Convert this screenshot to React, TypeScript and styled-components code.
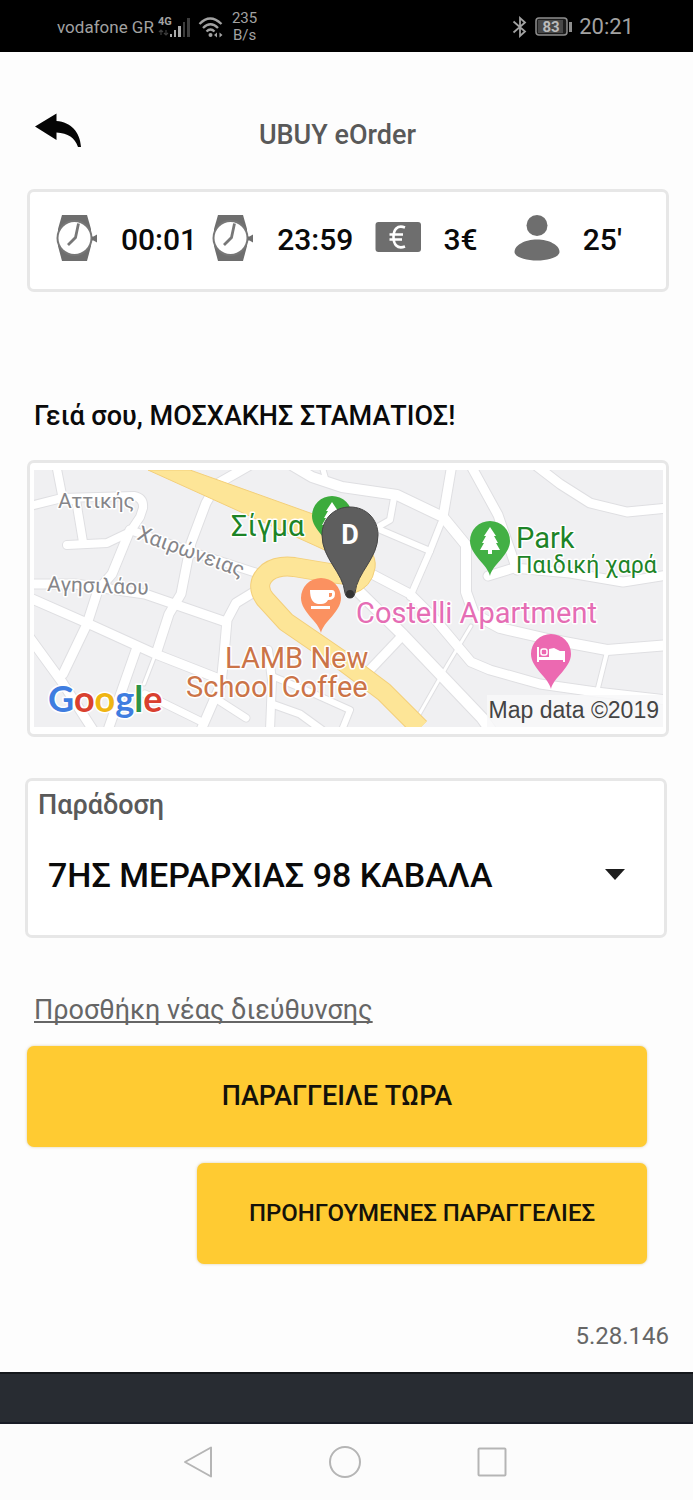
import React from "react";
import styled, { createGlobalStyle } from "styled-components";

const GlobalStyle = createGlobalStyle`
  * { box-sizing: border-box; }
  body {
    margin: 0;
    background: #fdfdfd;
    font-family: Roboto, "Noto Sans", sans-serif;
    color: #0a0a0a;
  }
`;

const Screen = styled.div`
  display: flex;
  flex-direction: column;
  min-height: 100vh;
`;

const StatusBar = styled.header`
  display: flex;
  align-items: center;
  justify-content: space-between;
  height: 52px;
  padding: 2px 59px 0 57px;
  background: #000;
  color: #a2a2a2;
`;

const StatusGroup = styled.div<{ $gap: number }>`
  display: flex;
  align-items: center;
  gap: ${(p) => p.$gap}px;
`;

const Carrier = styled.span`
  font-size: 17px;
  line-height: 24px;
`;

const SignalGroup = styled.div`
  display: flex;
  align-items: center;
  gap: 8px;
`;

const Speed = styled.span`
  font-size: 15px;
  line-height: 17px;
  text-align: center;
`;

const Clock = styled.time`
  font-size: 22px;
  line-height: 24px;
`;

const Content = styled.main`
  flex: 1;
  display: flex;
  flex-direction: column;
  padding: 56px 24px 20px 27px;
`;

const TitleRow = styled.div`
  display: grid;
  grid-template-columns: 1fr auto 1fr;
  align-items: center;
  height: 54px;
  padding: 0 28px 0 7px;
`;

const BackButton = styled.button`
  justify-self: start;
  display: flex;
  padding: 0 0 8px;
  border: 0;
  background: none;
`;

const Title = styled.h1`
  margin: 0;
  font-size: 27px;
  line-height: 32px;
  font-weight: 500;
  color: #595959;
`;

const Card = styled.section`
  border: 3px solid #e7e7e7;
  border-radius: 7px;
  background: #fff;
`;

const Stats = styled(Card)`
  display: grid;
  grid-template-columns: 156fr 162fr 139fr 126fr;
  align-items: center;
  height: 103px;
  margin-top: 27px;
  padding: 0 26px 2px;
`;

const Stat = styled.div`
  display: flex;
  align-items: center;
  gap: 23px;
  font-size: 30px;
  line-height: 34px;
  font-weight: 500;
  white-space: nowrap;

  svg { flex: none; margin-bottom: 4px; }
`;

const Greeting = styled.h2`
  margin: 108px 0 0 7px;
  font-size: 27px;
  line-height: 32px;
  font-weight: 500;
`;

const MapCard = styled(Card)`
  margin-top: 28px;
  padding: 7px 3px 7px 4px;

  svg { display: block; width: 100%; height: auto; }
`;

const AddressCard = styled(Card)`
  display: flex;
  flex-direction: column;
  height: 160px;
  margin: 41px 2px 0 -2px;
  padding: 8px 10px 0;
`;

const AddressLabel = styled.label`
  font-size: 27px;
  line-height: 32px;
  font-weight: 500;
  color: #5a5a5a;
`;

const SelectWrap = styled.div`
  display: flex;
  align-items: center;
  position: relative;
  height: 76px;
  margin-top: 16px;

  svg {
    position: absolute;
    right: 28px;
    pointer-events: none;
  }
`;

const AddressSelect = styled.select`
  appearance: none;
  width: 100%;
  height: 100%;
  padding: 0 60px 0 10px;
  border: 0;
  background: transparent;
  color: #0a0a0a;
  font-family: inherit;
  font-size: 34px;
  font-weight: 500;
`;

const AddLink = styled.a`
  align-self: flex-start;
  margin: 56px 0 0 7px;
  font-size: 27px;
  line-height: 32px;
  color: #666;
  text-decoration: underline;
  text-decoration-thickness: 2px;
  text-underline-offset: 2px;
  text-decoration-skip-ink: none;
`;

const Actions = styled.div`
  display: flex;
  flex-direction: column;
  align-items: flex-end;
  gap: 16px;
  margin: 20px 22px 0 0;
`;

const ActionButton = styled.button<{ $secondary?: boolean }>`
  width: ${(p) => (p.$secondary ? "calc(100% - 170px)" : "100%")};
  height: 101px;
  padding: 0 0 2px;
  border: 0;
  border-radius: 7px;
  background: #ffcb32;
  box-shadow: 0 0 3px rgba(160, 120, 0, 0.35);
  color: #14120a;
  font-family: inherit;
  font-size: ${(p) => (p.$secondary ? "24px" : "27px")};
  font-weight: 500;
`;

const Version = styled.p`
  align-self: flex-end;
  margin: 56px 0 0;
  font-size: 24px;
  line-height: 32px;
  color: #666;
`;

const Footer = styled.div`
  height: 52px;
  background: #282c32;
  border-top: 2px solid #14171b;
  border-bottom: 2px solid #181b25;
`;

const NavBar = styled.nav`
  display: flex;
  align-items: center;
  justify-content: center;
  gap: 116px;
  height: 76px;
  padding-right: 4px;
  background: #fcfcfc;
`;

const NavButton = styled.button`
  display: flex;
  padding: 0;
  border: 0;
  background: none;
`;

const WatchIcon = () => (
  <svg width="42" height="46" viewBox="0 0 42 46" aria-hidden="true">
    <path d="M6 0H31L35 14V31L31 46H6L2 31V14Z" fill="#6e6e6e" />
    <circle cx="18.500" cy="23" r="18" fill="#777" />
    <circle cx="18.500" cy="23" r="16" fill="#fff" />
    <path d="M36 21.500H37.500L41 19.500V27.500L37.500 25.500H36Z" fill="#6e6e6e" />
    <path d="M22.500 8.500L19.500 22.500L12 30" fill="none" stroke="#777" strokeWidth="2.800" />
  </svg>
);

const EuroIcon = () => (
  <svg width="46" height="46" viewBox="0 0 46 46" aria-hidden="true">
    <rect x="0.500" y="7" width="45.500" height="30" rx="3" fill="#6e6e6e" />
    <path
      d="M30 12.500C22 9.500 18.500 15 18.500 22S22 34.500 30 31.500M14.500 19.500H28M14.500 24.500H27"
      fill="none"
      stroke="#fff"
      strokeWidth="2.600"
    />
  </svg>
);

const PersonIcon = () => (
  <svg width="46" height="46" viewBox="0 0 46 46" aria-hidden="true">
    <circle cx="23" cy="10.500" r="10.500" fill="#6e6e6e" />
    <path d="M0.500 37C0.500 30 11 24.500 23 24.500S45.500 30 45.500 37C45.500 42 34 45.500 23 45.500S0.500 42 0.500 37Z" fill="#6e6e6e" />
  </svg>
);

const stats = [
  { icon: <WatchIcon />, value: "00:01" },
  { icon: <WatchIcon />, value: "23:59" },
  { icon: <EuroIcon />, value: "3€" },
  { icon: <PersonIcon />, value: "25'" },
];

// Street centre lines: [path, width]
const streets: [string, number][] = [
  ["M56 464L63 500L76 500L83 542", 8],
  ["M30 506L62 498L134 496Q144 498 143 508L140 517L130 532L107 543L67 545", 8],
  ["M130 530L112 574L98 590L87 624L63 674", 9],
  ["M130 530L195 553L260 574", 8],
  ["M252 464L217 484L206 503L191 543L181 594L169 614L157 651", 9],
  ["M30 598L87 623L153 653L222 680", 9],
  ["M30 584L75 584L145 594L226 622", 9],
  ["M254 592L236 603L227 620L224 655L221 684L201 730", 9],
  ["M136 650L122 690L108 730", 9],
  ["M30 638L62 682L93 730", 9],
  ["M154 658L144 684", 3],
  ["M145 694L202 722", 7],
  ["M218 700L246 718", 7],
  ["M290 464L312 477L342 487L397 495L443 517L466 545V592L474 614L500 628L548 639L607 650L668 645", 10],
  ["M322 466L326 480", 5],
  ["M452 464L443 517", 9],
  ["M470 464L498 515L517 570", 9],
  ["M534 464L560 484L590 503L627 512L668 508", 9],
  ["M394 498L390 520L376 528L430 551", 6],
  ["M441 523L430 551L410 597", 6],
  ["M488 576L514 568L570 573L623 582L668 575", 9],
  ["M368 572L410 594L434 618L471 662L490 670L540 684L596 692L668 700", 9],
  ["M353 586L403 635L482 718L492 732", 11],
  ["M402 636L366 674", 9],
  ["M471 626L448 664L416 720", 3],
  ["M607 652L597 692", 4],
  ["M268 650L272 680L270 730", 8],
  ["M272 676L310 692L350 710L342 730", 6],
  ["M272 704L300 714L322 730", 7],
];

const HIGHWAY_LOOP =
  "M366 577L330 573L294 567Q278 565 268 572Q254 584 265 599L286 622L340 659L384 692L420 728";
const HIGHWAY_TOP = "M148 470H190L313 514L346 530Q378 548 375 568Q372 588 352 594L346 560L316 546Z";

const MapLabel = styled.text<{ $size: number; $tone: string }>`
  font-family: Roboto, "Noto Sans", sans-serif;
  font-size: ${(p) => p.$size}px;
  fill: ${(p) => p.$tone};
  stroke: #fff;
  stroke-width: 3px;
  stroke-linejoin: round;
  paint-order: stroke;
`;

const LogoText = styled.text`
  font-family: Lato, sans-serif;
  font-size: 36px;
  font-weight: 700;
  stroke: #fff;
  stroke-width: 3px;
  paint-order: stroke;
`;

const Attribution = styled.text`
  font-family: "Liberation Sans", Arial, sans-serif;
  font-size: 23px;
  fill: #444;
`;

const PinLetter = styled.text`
  font-family: Roboto, sans-serif;
  font-size: 27px;
  font-weight: 700;
  fill: #fff;
`;

const PIN = "M0 35C-2 24 -20 14 -20 0A20 20 0 1 1 20 0C20 14 2 24 0 35Z";
const TREE = "M0 -14L6 -5H4L8 2H6L10 9H2V13H-2V9H-10L-6 2H-8L-4 -5H-6Z";

const StreetMap = () => (
  <svg viewBox="34 470 629 257" role="img" aria-label="Χάρτης">
    <rect x="34" y="470" width="629" height="257" fill="#f0f0f2" />
    <g fill="none" stroke="#dfdfe2" strokeLinejoin="round" strokeLinecap="round">
      {streets.map(([d, w]) => <path key={d} d={d} strokeWidth={w + 2} />)}
    </g>
    <g fill="none" stroke="#fff" strokeLinejoin="round" strokeLinecap="round">
      {streets.map(([d, w]) => <path key={d} d={d} strokeWidth={w} />)}
    </g>
    <path d={HIGHWAY_LOOP} fill="none" stroke="#f3cf7a" strokeWidth="20" strokeLinejoin="round" />
    <path d={HIGHWAY_TOP} fill="#fde597" stroke="#f3cf7a" strokeWidth="1" />
    <path d={HIGHWAY_LOOP} fill="none" stroke="#fde597" strokeWidth="18" strokeLinejoin="round" />

    <MapLabel $size={21} $tone="#858589" x="58" y="508">Αττικής</MapLabel>
    <MapLabel $size={21} $tone="#858589" transform="translate(136 539) rotate(20)">Χαιρώνειας</MapLabel>
    <MapLabel $size={21} $tone="#858589" transform="translate(47 591) rotate(2)">Αγησιλάου</MapLabel>

    <g transform="translate(332 516)">
      <path d={PIN} fill="#3cab3c" />
      <path d={TREE} fill="#fff" />
    </g>
    <MapLabel $size={29} $tone="#1d8427" x="231" y="536">Σίγμα</MapLabel>

    <g transform="translate(321 598)">
      <path d={PIN} fill="#fb9160" />
      <path d="M-11 -8H11Q14 -8 14 -4Q14 2 7 2Q5 6 0 6H-3Q-11 5 -11 -8ZM8 -5V-1Q11 -1 11 -3V-5ZM-10 8H9V11H-10Z" fill="#fff" fillRule="evenodd" />
    </g>

    <g>
      <path d="M350 507C334 507 322 519 322 535C322 559 343 572 345 593Q346 598 350 598Q354 598 355 593C357 572 378 559 378 535C378 519 366 507 350 507Z" fill="#5e5e5e" stroke="#444" strokeWidth="1" />
      <circle cx="350" cy="594" r="4" fill="#333" />
      <PinLetter x="350" y="544" textAnchor="middle">D</PinLetter>
    </g>

    <g transform="translate(490 541)">
      <path d={PIN} fill="#43b045" />
      <path d={TREE} fill="#fff" />
    </g>
    <MapLabel $size={29} $tone="#1d8427" x="516" y="548">Park</MapLabel>
    <MapLabel $size={23} $tone="#1d8427" x="516" y="573">Παιδική χαρά</MapLabel>

    <MapLabel $size={29} $tone="#e56db4" x="356" y="623">Costelli Apartment</MapLabel>
    <g transform="translate(551 654)">
      <path d={PIN} fill="#ec69b1" />
      <path d="M-14 -7H-12V3H14V8H12V6H-12V8H-14Z" fill="#fff" />
      <path d="M-2 2V-5L3 -6L9 -3H14V4H-2Z" fill="#fff" />
      <rect x="-10" y="-5" width="6" height="6" rx="2" fill="none" stroke="#fff" strokeWidth="1.500" />
    </g>

    <MapLabel $size={29} $tone="#cb7448" x="225" y="668">LAMB New</MapLabel>
    <MapLabel $size={29} $tone="#cb7448" x="186" y="697">School Coffee</MapLabel>

    <LogoText x="48" y="712">
      <tspan fill="#3f7de0">G</tspan>
      <tspan fill="#d9402f">o</tspan>
      <tspan fill="#efb512">o</tspan>
      <tspan fill="#3f7de0">g</tspan>
      <tspan fill="#2c9347">l</tspan>
      <tspan fill="#d9402f">e</tspan>
    </LogoText>

    <rect x="487" y="695" width="176" height="32" fill="#f8f8f9" fillOpacity="0.850" />
    <Attribution x="659" y="718" textAnchor="end">Map data ©2019</Attribution>
  </svg>
);

const SignalIcon = () => (
  <svg width="32" height="24" viewBox="0 0 32 24" aria-label="4G">
    <text x="0" y="10" fontSize="11" fontWeight="700" fill="#a2a2a2">4G</text>
    <path d="M3 15V20M1 17L3 15L5 17M8 15V20M6 18L8 20L10 18" fill="none" stroke="#3d3d3d" strokeWidth="1.200" />
    <path d="M12 19H14V22H12ZM16 15H18V22H16ZM20 11H23V22H20Z" fill="#aaa" />
    <path d="M25 7H27V22H25ZM29 3H32V22H29Z" fill="#3d3d3d" />
  </svg>
);

const WifiIcon = () => (
  <svg width="26" height="22" viewBox="0 0 26 22" aria-hidden="true">
    <path d="M1.500 8Q12 -3 23.500 8M5 12Q12.500 4.500 20 12M8.500 15.500Q12.500 11.500 16.500 15.500" fill="none" stroke="#a2a2a2" strokeWidth="2.300" />
    <circle cx="12.500" cy="19" r="2" fill="#a2a2a2" />
    <path d="M16 19L19 16.500V21.500ZM24.500 19L21.500 16.500V21.500Z" fill="#a2a2a2" />
  </svg>
);

const BluetoothIcon = () => (
  <svg width="16" height="22" viewBox="0 0 16 22" aria-hidden="true">
    <path d="M1.500 5.500L13 15.500L8 20V2L13 6.500L1.500 16.500" fill="none" stroke="#a2a2a2" strokeWidth="1.800" />
  </svg>
);

const BatteryIcon = () => (
  <svg width="37" height="20" viewBox="0 0 37 20" aria-label="83%">
    <rect x="1" y="1" width="31" height="17" rx="3" fill="#1c1c1c" stroke="#8d8d8d" strokeWidth="1.500" />
    <rect x="3" y="3" width="25" height="13" fill="#484848" />
    <rect x="34" y="5" width="3" height="10" fill="#8d8d8d" />
    <text x="16" y="15" fontSize="15" fontWeight="700" fill="#bbb" textAnchor="middle">83</text>
  </svg>
);

export default function App() {
  return (
    <Screen>
      <GlobalStyle />
      <StatusBar>
        <StatusGroup $gap={4}>
          <Carrier>vodafone GR</Carrier>
          <SignalGroup>
            <SignalIcon />
            <WifiIcon />
            <Speed>235<br />B/s</Speed>
          </SignalGroup>
        </StatusGroup>
        <StatusGroup $gap={7}>
          <BluetoothIcon />
          <BatteryIcon />
          <Clock>20:21</Clock>
        </StatusGroup>
      </StatusBar>

      <Content>
        <TitleRow>
          <BackButton aria-label="Πίσω">
            <svg width="48" height="36" viewBox="0 0 48 36">
              <path d="M1 13.500L22.500 0.500V8C37 9 46 19 47 34H44C41 25 34 20 22.500 19.500V27Z" fill="#050505" />
            </svg>
          </BackButton>
          <Title>UBUY eOrder</Title>
        </TitleRow>

        <Stats>
          {stats.map((s) => (
            <Stat key={s.value}>
              {s.icon}
              <span>{s.value}</span>
            </Stat>
          ))}
        </Stats>

        <Greeting>Γειά σου, ΜΟΣΧΑΚΗΣ ΣΤΑΜΑΤΙΟΣ!</Greeting>

        <MapCard>
          <StreetMap />
        </MapCard>

        <AddressCard>
          <AddressLabel htmlFor="address">Παράδοση</AddressLabel>
          <SelectWrap>
            <AddressSelect id="address">
              <option>7ΗΣ ΜΕΡΑΡΧΙΑΣ 98 ΚΑΒΑΛΑ</option>
            </AddressSelect>
            <svg width="22" height="12" viewBox="0 0 22 12" aria-hidden="true">
              <path d="M1 0H21L11 11Z" fill="#1d1d1d" />
            </svg>
          </SelectWrap>
        </AddressCard>

        <AddLink href="#new-address">Προσθήκη νέας διεύθυνσης</AddLink>

        <Actions>
          <ActionButton>ΠΑΡΑΓΓΕΙΛΕ ΤΩΡΑ</ActionButton>
          <ActionButton $secondary>ΠΡΟΗΓΟΥΜΕΝΕΣ ΠΑΡΑΓΓΕΛΙΕΣ</ActionButton>
        </Actions>

        <Version>5.28.146</Version>
      </Content>

      <Footer />
      <NavBar>
        <NavButton aria-label="Πίσω">
          <svg width="30" height="32" viewBox="0 0 30 32">
            <path d="M28 1.500V30.500L2 16Z" fill="none" stroke="#b5b5b5" strokeWidth="2" strokeLinejoin="round" />
          </svg>
        </NavButton>
        <NavButton aria-label="Αρχική">
          <svg width="32" height="32" viewBox="0 0 32 32">
            <circle cx="16" cy="16" r="15" fill="none" stroke="#b5b5b5" strokeWidth="2" />
          </svg>
        </NavButton>
        <NavButton aria-label="Πρόσφατα">
          <svg width="30" height="30" viewBox="0 0 30 30">
            <rect x="1.500" y="1.500" width="27" height="27" rx="1" fill="none" stroke="#b5b5b5" strokeWidth="2" />
          </svg>
        </NavButton>
      </NavBar>
    </Screen>
  );
}
